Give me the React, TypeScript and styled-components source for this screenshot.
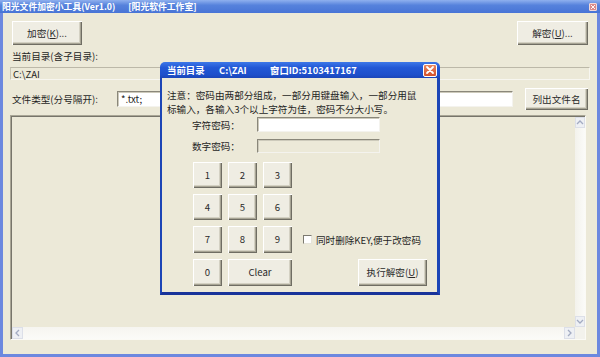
import React from "react";
import styled, { createGlobalStyle } from "styled-components";

const FONT = `"Noto Sans CJK SC", "Noto Sans", sans-serif`;

const GlobalStyle = createGlobalStyle`
  html, body {
    margin: 0;
    padding: 0;
    background: #ece9d8;
  }
  body {
    font-family: ${FONT};
    font-size: 9.6px;
    color: #1f1f1f;
  }
  * {
    box-sizing: border-box;
  }
`;

// Main window
const Frame = styled.div`
  position: relative;
  width: 600px;
  height: 357px;
  display: flex;
  flex-direction: column;
  background: #ece9d8;
  overflow: hidden;
`;

const TitleBar = styled.div`
  flex: none;
  height: 13px;
  display: flex;
  align-items: center;
  justify-content: space-between;
  padding: 0 3px 0 2px;
  background: linear-gradient(#8fb0ee, #5682dc 40%, #4874d6);
  color: #fff;
  font-weight: bold;
  font-size: 8.8px;
  line-height: 13px;
  white-space: pre;
`;

const TitleGap = styled.span`
  display: inline-block;
  width: 13px;
`;

const TinyClose = styled.div`
  width: 8px;
  height: 8px;
  border: 1px solid #f3d9d9;
  border-radius: 1px;
  background: #d98a8a;
  display: flex;
  align-items: center;
  justify-content: center;
`;

const Client = styled.div`
  flex: 1;
  display: flex;
  flex-direction: column;
  padding: 8px 9px 0;
  border: 3px solid #6c88df;
  border-top: none;
`;

const ButtonRow = styled.div`
  display: flex;
  justify-content: space-between;
  height: 24px;
`;

const Button = styled.button<{ $w: number; $h: number }>`
  width: ${({ $w }) => $w}px;
  height: ${({ $h }) => $h}px;
  margin: 0;
  padding: 0 0 1px;
  display: flex;
  align-items: center;
  justify-content: center;
  font-family: ${FONT};
  font-size: 9.6px;
  color: #2a2a2a;
  background: #efede3;
  border: none;
  box-shadow: inset 1px 1px #ffffff, inset -1px -1px #6f6d63,
    inset -2px -2px #a7a494, inset -3px -3px #d4d1c3;
`;

const Label = styled.div`
  margin-top: 6px;
  height: 11px;
  line-height: 11px;
`;

const PathField = styled.div`
  margin: 5px -2px 0;
  height: 13px;
  line-height: 12px;
  padding-left: 2px;
  border-top: 1px solid #bcb8a8;
  border-left: 1px solid #c8c4b5;
  border-bottom: 1px solid #f7f6f0;
  border-right: 1px solid #f7f6f0;
`;

const TypeRow = styled.div`
  margin-top: 8px;
  height: 22px;
  display: flex;
  align-items: center;
`;

const TypeLabel = styled.div`
  width: 105px;
`;

const TextBox = styled.div<{ $w: number; $h: number; $disabled?: boolean }>`
  width: ${({ $w }) => $w}px;
  height: ${({ $h }) => $h}px;
  line-height: ${({ $h }) => $h - 2}px;
  padding-left: 3px;
  background: ${({ $disabled }) => ($disabled ? "#ece9d8" : "#ffffff")};
  border-top: 1px solid #8a877a;
  border-left: 1px solid #8a877a;
  border-bottom: 1px solid #f4f3ee;
  border-right: 1px solid #f4f3ee;
  box-shadow: inset 1px 1px #cdcabb;
`;

const ListBox = styled.div`
  margin: 5px 2px 0 -2px;
  height: 225px;
  display: grid;
  grid-template-columns: 1fr 10px;
  grid-template-rows: 1fr 12px;
  border-top: 1px solid #a9a696;
  border-left: 1px solid #a9a696;
  border-bottom: 1px solid #fbfaf5;
  border-right: 1px solid #fbfaf5;
  box-shadow: inset 1px 1px #77756b;
  padding: 1px 0 0 1px;
`;

const ListBody = styled.div`
  background: #ece9d8;
`;

const VScroll = styled.div`
  display: flex;
  flex-direction: column;
  justify-content: space-between;
  background: linear-gradient(90deg, #f3f2ec, #fbfbf8);
`;

const HScroll = styled.div`
  display: flex;
  justify-content: space-between;
  background: linear-gradient(#f6f5f0, #fbfbf8);
`;

const Corner = styled.div`
  background: #f3f2ec;
`;

const ScrollArrow = styled.div<{ $w: number; $h: number }>`
  width: ${({ $w }) => $w}px;
  height: ${({ $h }) => $h}px;
  display: flex;
  align-items: center;
  justify-content: center;
  background: #eef0f4;
  border: 1px solid #dcdfe8;
`;

// Dialog
const Dialog = styled.div`
  position: absolute;
  left: 160px;
  top: 62px;
  width: 280px;
  height: 233px;
  display: flex;
  flex-direction: column;
`;

const DialogTitle = styled.div`
  flex: none;
  height: 16px;
  display: flex;
  align-items: center;
  padding: 0 3px 0 7px;
  border-radius: 5px 5px 0 0;
  background: linear-gradient(#3d78e8, #2258d6 35%, #1d4fcb 80%, #1b45b8);
  color: #fff;
  font-weight: bold;
  font-size: 9.4px;
  white-space: pre;
`;

const TitlePart = styled.span<{ $w?: number }>`
  display: inline-block;
  width: ${({ $w }) => ($w ? `${$w}px` : "auto")};
`;

const CloseBtn = styled.div`
  margin-left: auto;
  width: 14px;
  height: 13px;
  border: 1px solid #ffffff;
  border-radius: 2px;
  background: linear-gradient(#e8865f, #d4512b);
  display: flex;
  align-items: center;
  justify-content: center;
`;

const DialogBody = styled.div`
  flex: 1;
  display: flex;
  flex-direction: column;
  padding: 11px 0 0 5px;
  background: #ece9d8;
  border-left: 2px solid #1c45b6;
  border-right: 3px solid #1c45b6;
  border-bottom: 3px solid #18339a;
`;

const Note = styled.div`
  line-height: 14px;
  margin-top: -1px;
  white-space: nowrap;
`;

const PwRow = styled.div<{ $top: number }>`
  margin-top: ${({ $top }) => $top}px;
  margin-left: 25px;
  display: flex;
  align-items: center;
`;

const PwLabel = styled.div`
  width: 65px;
`;

const Keypad = styled.div`
  margin-top: 9px;
  margin-left: 26px;
  display: grid;
  grid-template-columns: 29px 29px 29px 129px;
  grid-template-rows: 26px 26px 27px 27px;
  gap: 6px;
`;

const WideKey = styled(Button)`
  grid-column: span 2;
`;

const CheckLine = styled.label`
  grid-column: 4;
  grid-row: 3;
  margin-left: 5px;
  display: flex;
  align-items: center;
  gap: 4px;
  white-space: nowrap;
`;

const CheckBox = styled.span`
  width: 9px;
  height: 9px;
  background: #fff;
  border-top: 1px solid #7c7a70;
  border-left: 1px solid #7c7a70;
  border-bottom: 1px solid #e6e4da;
  border-right: 1px solid #e6e4da;
`;

const ExecCell = styled.div`
  grid-column: 4;
  grid-row: 4;
  display: flex;
  justify-content: flex-end;
`;

const Arrow: React.FC<{ dir: "up" | "down" | "left" | "right" }> = ({ dir }) => {
  const pts = {
    up: "1,5 4,2 7,5",
    down: "1,2 4,5 7,2",
    left: "5,1 2,4 5,7",
    right: "2,1 5,4 2,7",
  }[dir];
  return (
    <svg width="8" height="8" viewBox="0 0 8 8">
      <polyline points={pts} fill="none" stroke="#a3abc2" strokeWidth="1.3" />
    </svg>
  );
};

const Cross: React.FC<{ size: number; stroke: number }> = ({ size, stroke }) => (
  <svg width={size} height={size} viewBox="0 0 10 10">
    <path d="M2 2 L8 8 M8 2 L2 8" stroke="#fff" strokeWidth={stroke} strokeLinecap="round" />
  </svg>
);

const keys = ["1", "2", "3", "4", "5", "6", "7", "8", "9"];

const App: React.FC = () => {
  return (
    <>
      <GlobalStyle />
      <Frame>
        <TitleBar>
          <span>
            阳光文件加密小工具(Ver1.0)<TitleGap />[阳光软件工作室]
          </span>
          <TinyClose>
            <Cross size={6} stroke={1.6} />
          </TinyClose>
        </TitleBar>

        <Client>
          <ButtonRow>
            <Button $w={70} $h={24}>
              加密(<u>K</u>)...
            </Button>
            <Button $w={71} $h={24}>
              解密(<u>U</u>)...
            </Button>
          </ButtonRow>

          <Label>当前目录(含子目录):</Label>
          <PathField>C:\ZAI</PathField>

          <TypeRow>
            <TypeLabel>文件类型(分号隔开):</TypeLabel>
            <TextBox $w={396} $h={16}>*.txt;</TextBox>
            <Button $w={63} $h={22} style={{ marginLeft: 12 }}>
              列出文件名
            </Button>
          </TypeRow>

          <ListBox>
            <ListBody />
            <VScroll>
              <ScrollArrow $w={10} $h={11}>
                <Arrow dir="up" />
              </ScrollArrow>
              <ScrollArrow $w={10} $h={11}>
                <Arrow dir="down" />
              </ScrollArrow>
            </VScroll>
            <HScroll>
              <ScrollArrow $w={11} $h={12}>
                <Arrow dir="left" />
              </ScrollArrow>
              <ScrollArrow $w={11} $h={12}>
                <Arrow dir="right" />
              </ScrollArrow>
            </HScroll>
            <Corner />
          </ListBox>
        </Client>

        <Dialog>
          <DialogTitle>
            <TitlePart $w={52}>当前目录</TitlePart>
            <TitlePart $w={51}>C:\ZAI</TitlePart>
            <TitlePart>窗口ID:5103417167</TitlePart>
            <CloseBtn>
              <Cross size={10} stroke={1.8} />
            </CloseBtn>
          </DialogTitle>
          <DialogBody>
            <Note>
              注意：密码由两部分组成，一部分用键盘输入，一部分用鼠
              <br />
              标输入，各输入3个以上字符为佳，密码不分大小写。
            </Note>

            <PwRow $top={1}>
              <PwLabel>字符密码：</PwLabel>
              <TextBox $w={123} $h={15} />
            </PwRow>
            <PwRow $top={7}>
              <PwLabel>数字密码：</PwLabel>
              <TextBox $w={123} $h={14} $disabled />
            </PwRow>

            <Keypad>
              {keys.map((k, i) => (
                <React.Fragment key={k}>
                  <Button $w={29} $h={i < 6 ? 26 : 27}>
                    {k}
                  </Button>
                  {i % 3 === 2 && i < 6 && <span />}
                </React.Fragment>
              ))}
              <CheckLine>
                <CheckBox />
                同时删除KEY,便于改密码
              </CheckLine>
              <Button $w={29} $h={27}>
                0
              </Button>
              <WideKey $w={64} $h={27}>
                Clear
              </WideKey>
              <ExecCell>
                <Button $w={69} $h={27}>
                  执行解密(<u>U</u>)
                </Button>
              </ExecCell>
            </Keypad>
          </DialogBody>
        </Dialog>
      </Frame>
    </>
  );
};

export default App;
